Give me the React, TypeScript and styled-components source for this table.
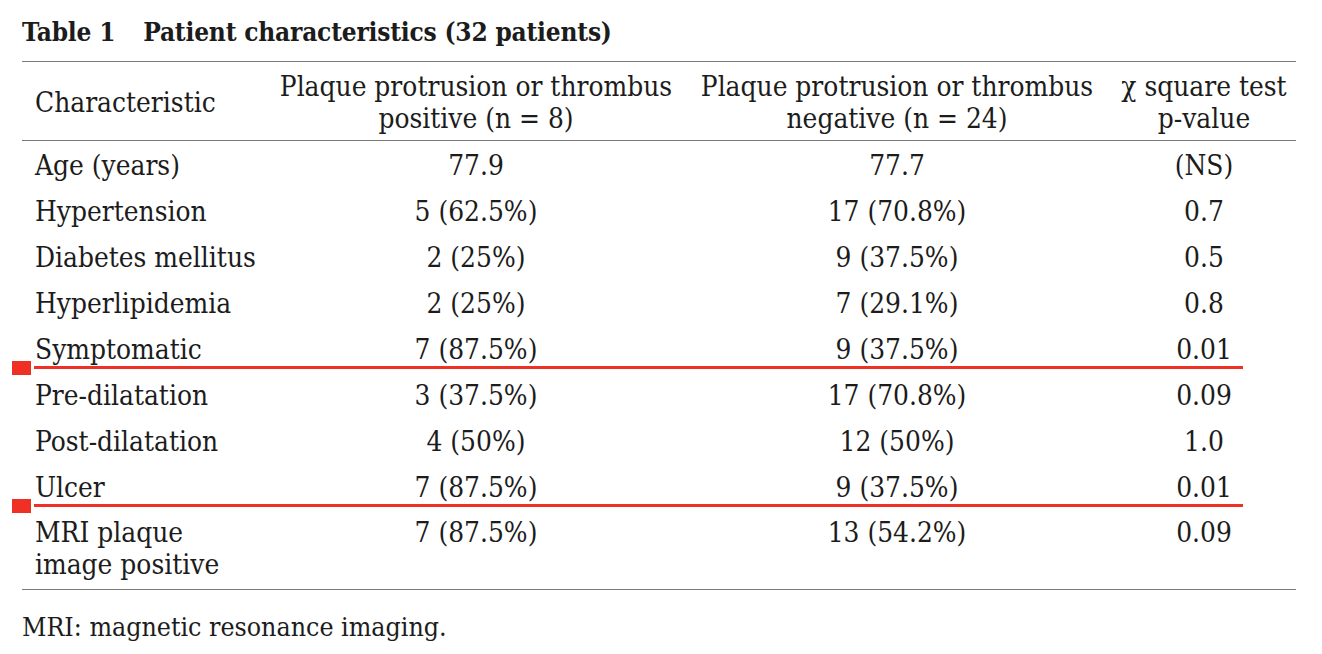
import React from "react";
import styled, { createGlobalStyle } from "styled-components";

const GlobalStyle = createGlobalStyle`
  html, body {
    margin: 0;
    padding: 0;
    background: #ffffff;
  }
  body {
    font-family: "DejaVu Serif Condensed", "DejaVu Serif", serif;
    color: #1c1c1c;
  }
`;

type Row = {
  label: string[];
  pos: string;
  neg: string;
  p: string;
  marked?: boolean;
};

const rows: Row[] = [
  { label: ["Age (years)"], pos: "77.9", neg: "77.7", p: "(NS)" },
  { label: ["Hypertension"], pos: "5 (62.5%)", neg: "17 (70.8%)", p: "0.7" },
  { label: ["Diabetes mellitus"], pos: "2 (25%)", neg: "9 (37.5%)", p: "0.5" },
  { label: ["Hyperlipidemia"], pos: "2 (25%)", neg: "7 (29.1%)", p: "0.8" },
  { label: ["Symptomatic"], pos: "7 (87.5%)", neg: "9 (37.5%)", p: "0.01", marked: true },
  { label: ["Pre-dilatation"], pos: "3 (37.5%)", neg: "17 (70.8%)", p: "0.09" },
  { label: ["Post-dilatation"], pos: "4 (50%)", neg: "12 (50%)", p: "1.0" },
  { label: ["Ulcer"], pos: "7 (87.5%)", neg: "9 (37.5%)", p: "0.01", marked: true },
  { label: ["MRI plaque", "image positive"], pos: "7 (87.5%)", neg: "13 (54.2%)", p: "0.09" },
];

function App() {
  return (
    <>
      <GlobalStyle />
      <Page>
        <Title>
          Table 1<TitleGap />Patient characteristics (32 patients)
        </Title>
        <Table>
          <HeadRow>
            <Cell $align="left">Characteristic</Cell>
            <Cell>
              Plaque protrusion or thrombus
              <br />
              positive (n = 8)
            </Cell>
            <Cell>
              Plaque protrusion or thrombus
              <br />
              negative (n = 24)
            </Cell>
            <Cell>
              χ square test
              <br />
              p-value
            </Cell>
          </HeadRow>
          {rows.map((r, i) => (
            <React.Fragment key={i}>
              <BodyRow $last={i === rows.length - 1}>
                <Cell $align="left" $top>
                  {r.label.map((l, j) => (
                    <div key={j}>{l}</div>
                  ))}
                </Cell>
                <Cell $top>{r.pos}</Cell>
                <Cell $top>{r.neg}</Cell>
                <Cell $top>{r.p}</Cell>
              </BodyRow>
              {r.marked && (
                <Marker>
                  <MarkerSquare />
                  <MarkerLine />
                </Marker>
              )}
            </React.Fragment>
          ))}
        </Table>
        <Footnote>MRI: magnetic resonance imaging.</Footnote>
      </Page>
    </>
  );
}
export default App;

const Page = styled.div`
  width: 1274px;
  padding: 17px 0 0 22px;
`;

const Title = styled.div`
  font-weight: bold;
  font-size: 26px;
  line-height: 30px;
  height: 30px;
  margin-bottom: 14px;
  display: flex;
  align-items: center;
  letter-spacing: -0.2px;
`;

const TitleGap = styled.span`
  display: inline-block;
  width: 28px;
`;

const Table = styled.div`
  border-top: 1.5px solid #7a7a7a;
  border-bottom: 1.5px solid #7a7a7a;
  display: flex;
  flex-direction: column;
`;

const HeadRow = styled.div`
  display: grid;
  grid-template-columns: 248px 412px 430px 184px;
  padding: 9px 0 5px;
  border-bottom: 1.5px solid #7a7a7a;
  font-size: 27.8px;
  line-height: 32px;
`;

const BodyRow = styled.div<{ $last?: boolean }>`
  display: grid;
  grid-template-columns: 248px 412px 430px 184px;
  padding: ${(p) => (p.$last ? "8px 0 8px" : "9px 0 5px")};
  font-size: 27.8px;
  line-height: 32px;
`;

const Cell = styled.div<{ $align?: "left" | "center"; $top?: boolean }>`
  display: flex;
  flex-direction: column;
  justify-content: ${(p) => (p.$top ? "flex-start" : "center")};
  align-items: ${(p) => (p.$align === "left" ? "flex-start" : "center")};
  text-align: ${(p) => (p.$align === "left" ? "left" : "center")};
  padding-left: ${(p) => (p.$align === "left" ? "13px" : "0")};
  white-space: nowrap;
`;

const Marker = styled.div`
  position: relative;
  height: 0;
`;

const MarkerSquare = styled.div`
  position: absolute;
  left: -10px;
  top: -10px;
  width: 19px;
  height: 14px;
  background: #ee3124;
`;

const MarkerLine = styled.div`
  position: absolute;
  left: 12px;
  top: -5px;
  width: 1209px;
  height: 3px;
  background: #ee3124;
`;

const Footnote = styled.div`
  font-size: 26.5px;
  line-height: 32px;
  margin-top: 21px;
`;
